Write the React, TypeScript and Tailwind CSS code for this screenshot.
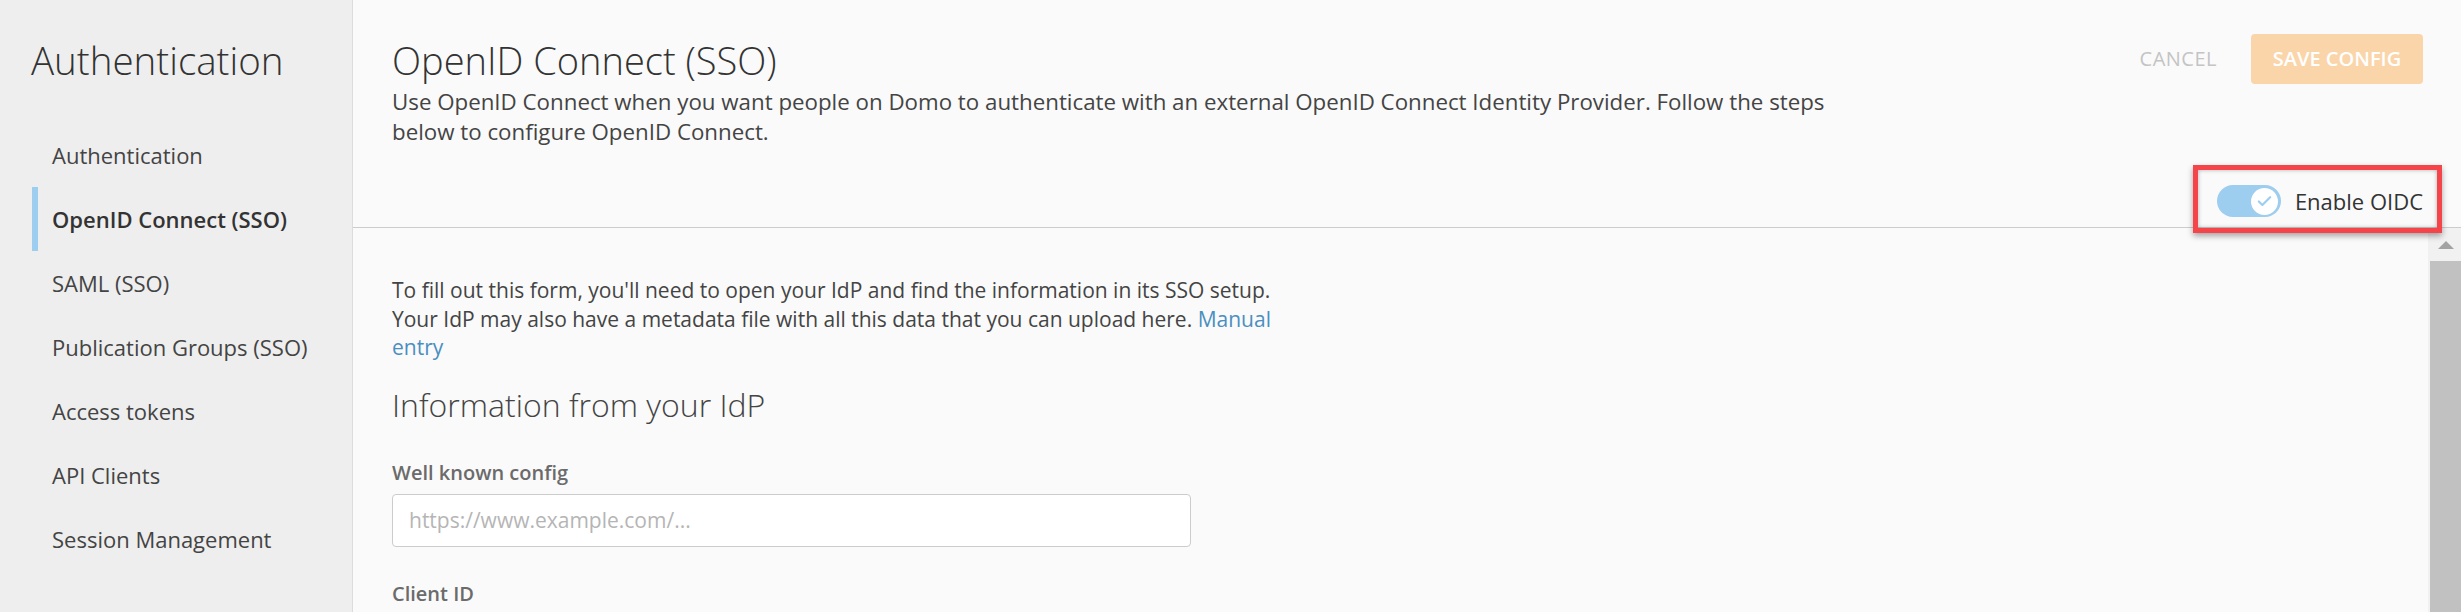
import { Check } from "lucide-react";

const navItems = [
  "Authentication",
  "OpenID Connect (SSO)",
  "SAML (SSO)",
  "Publication Groups (SSO)",
  "Access tokens",
  "API Clients",
  "Session Management",
];

function Sidebar() {
  return (
    <aside className="w-[353px] shrink-0 border-r border-[#dcdcdc] bg-[#eeeeee] pt-[34px]">
      <h1 className="pl-[31px] text-[38.5px] font-light leading-[52px] text-[#333333]">Authentication</h1>
      <nav className="mt-[37px]">
        {navItems.map((item) => {
          const active = item === "OpenID Connect (SSO)";
          return (
            <div
              key={item}
              className={
                active
                  ? "ml-[32px] flex h-[64px] items-center border-l-[6px] border-[#9dcdef] pl-[14px] text-[22px] font-semibold text-[#333333]"
                  : "ml-[32px] flex h-[64px] items-center border-l-[6px] border-transparent pl-[14px] text-[22px] text-[#444444]"
              }
            >
              {item}
            </div>
          );
        })}
      </nav>
    </aside>
  );
}

function Header() {
  return (
    <header className="relative h-[228px] shrink-0 border-b border-[#cccccc] pl-[39px] pr-[38px] pt-[34px]">
      <div className="flex items-start justify-between">
        <div>
          <h2 className="text-[38px] font-light leading-[52px] text-[#333333]">OpenID Connect (SSO)</h2>
          <p className="mt-[1px] max-w-[1460px] text-[22.3px] leading-[30px] text-[#444444]">
            Use OpenID Connect when you want people on Domo to authenticate with an external OpenID Connect Identity
            Provider. Follow the steps below to configure OpenID Connect.
          </p>
        </div>
        <div className="flex shrink-0 items-center gap-[34px]">
          <button className="text-[20px] tracking-[0.5px] text-[#c4c4c4]">CANCEL</button>
          <button className="h-[50px] w-[172px] rounded-[4px] bg-[#fbd5aa] text-[20px] font-semibold text-white">
            SAVE CONFIG
          </button>
        </div>
      </div>
      <div className="mt-[38px] flex items-center justify-end">
        <div className="flex h-[32px] w-[64px] items-center justify-end rounded-full bg-[#9dcdef] pr-[3px]">
          <div className="flex h-[27px] w-[27px] items-center justify-center rounded-full bg-white">
            <Check className="h-[17px] w-[17px] text-[#9dcdef]" strokeWidth={3} />
          </div>
        </div>
        <span className="ml-[14px] text-[22px] leading-[32px] text-[#333333]">Enable OIDC</span>
      </div>
      {/* annotation box */}
      <div className="pointer-events-none absolute right-[19px] top-[165px] h-[68px] w-[249px] border-[5px] border-[#f5444a] shadow-[0_3px_6px_rgba(0,0,0,0.35),inset_0_0_4px_rgba(0,0,0,0.3)]" />
    </header>
  );
}

function Scrollbar() {
  return (
    <div className="flex w-[33px] shrink-0 flex-col bg-[#f1f1f1]">
      <div className="flex h-[33px] items-center justify-center pl-[2px]">
        <svg width="16" height="8" viewBox="0 0 16 8">
          <polygon points="8,0 16,8 0,8" fill="#a3a3a3" />
        </svg>
      </div>
      <div className="ml-[2px] flex-1 bg-[#c1c1c1]" />
    </div>
  );
}

export default function App() {
  return (
    <div className="flex h-[612px] w-[2461px] overflow-hidden bg-[#fafafa] font-['Open_Sans',sans-serif]">
      <Sidebar />
      <main className="flex min-w-0 flex-1 flex-col">
        <Header />
        <div className="flex min-h-0 flex-1">
          <div className="flex-1 pl-[39px] pt-[48px]">
            <p className="max-w-[880px] text-[21px] leading-[28.5px] text-[#444444]">
              To fill out this form, you'll need to open your IdP and find the information in its SSO setup. Your IdP
              may also have a metadata file with all this data that you can upload here.{" "}
              <a className="text-[#4a8fc0]">Manual entry</a>
            </p>
            <h3 className="mt-[23px] text-[32px] font-light leading-[40px] text-[#444444]">Information from your IdP</h3>
            <label className="mt-[34px] block text-[20px] font-semibold leading-[28px] text-[#6b6b6b]">
              Well known config
            </label>
            <input
              className="mt-[7px] block h-[53px] w-[799px] rounded-[4px] border border-[#cccccc] bg-white px-[16px] text-[21px] placeholder:text-[#b5b5b5]"
              placeholder="https://www.example.com/..."
            />
            <label className="mt-[33px] block text-[20px] font-semibold leading-[28px] text-[#6b6b6b]">Client ID</label>
          </div>
          <Scrollbar />
        </div>
      </main>
    </div>
  );
}
